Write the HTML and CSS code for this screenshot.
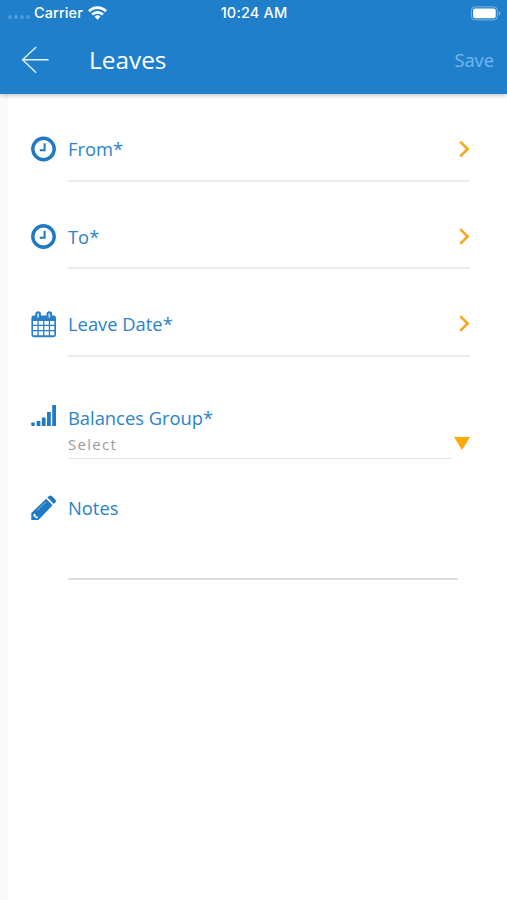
FILE: index.html
```html
<!DOCTYPE html>
<html lang="en">
<head>
<meta charset="utf-8">
<title>Leaves</title>
<link rel="stylesheet" href="styles.css">
</head>
<body>
<header class="header">
  <div class="status">
    <div class="status-left">
      <span class="dots"><i></i><i></i><i></i><i></i></span>
      <span class="carrier">Carrier</span>
      <svg class="wifi" width="19" height="14" viewBox="0 0 19 14" fill="none" stroke="#fff" stroke-width="2.7"><path d="M1 5.2a12 12 0 0 1 17 0M4.1 8.5a7.7 7.7 0 0 1 10.8 0"/><path d="M9.5 13.8 6.6 10.8a4.1 4.1 0 0 1 5.8 0z" fill="#fff" stroke="none"/></svg>
    </div>
    <span class="time">10:24 AM</span>
    <svg class="battery" width="31" height="15" viewBox="0 0 31 15"><rect x="1.4" y=".9" width="26" height="13" rx="3.6" fill="none" stroke="#7fb6e3" stroke-width="1"/><rect x="3.1" y="2.6" width="22.6" height="9.6" rx="2" fill="#fff"/><path d="M28.8 5.4q1.6.6 1.6 2.1t-1.6 2.1z" fill="#7fb6e3"/></svg>
  </div>
  <div class="toolbar">
    <svg class="back" width="28" height="28" viewBox="0 0 28 28" fill="none" stroke="#dff2ff" stroke-width="1.4"><path d="M15.2 1 1.6 13.7l13.6 13M1.6 13.7h26"/></svg>
    <h1 class="title">Leaves</h1>
    <span class="save">Save</span>
  </div>
</header>
<main class="form">
  <div class="row">
    <svg class="icon" width="26" height="26" viewBox="0 0 26 26" fill="none" stroke="#2079c3"><circle cx="12.5" cy="13" r="10.7" stroke-width="3.4"/><path d="M13.6 7.2v7H8.8" stroke-width="2"/></svg>
    <div class="field"><span class="label">From*</span><svg class="chevron" width="12" height="18" viewBox="0 0 12 18"><path d="M2.2 1.6 9.7 9l-7.5 7.4"/></svg></div>
  </div>
  <div class="row">
    <svg class="icon" width="26" height="26" viewBox="0 0 26 26" fill="none" stroke="#2079c3"><circle cx="12.5" cy="12.5" r="10.7" stroke-width="3.4"/><path d="M13.6 6.7v7H8.8" stroke-width="2"/></svg>
    <div class="field"><span class="label">To*</span><svg class="chevron" width="12" height="18" viewBox="0 0 12 18"><path d="M2.2 1.1 9.7 8.5l-7.5 7.4"/></svg></div>
  </div>
  <div class="row">
    <svg class="icon" width="26" height="28" viewBox="0 0 26 28"><rect x=".4" y="4.6" width="24.6" height="21.6" rx="2.4" fill="#2780c9"/><path d="M2 10h4.4v3.8H2zm5.7 0h4.4v3.8H7.7zm5.7 0h4.4v3.8h-4.4zm5.7 0h4.2v3.8h-4.2zM2 15.1h4.4v3.9H2zm5.7 0h4.4v3.9H7.7zm5.7 0h4.4v3.9h-4.4zm5.7 0h4.2v3.9h-4.2zM2 20.3h4.4v4H2zm5.7 0h4.4v4H7.7zm5.7 0h4.4v4h-4.4zm5.7 0h4.2v4h-4.2z" fill="#fff"/><g fill="#b9d9f2" stroke="#2780c9" stroke-width="1.9"><rect x="5.2" y="1.2" width="3.8" height="6.6" rx="1.9"/><rect x="16.4" y="1.2" width="3.8" height="6.6" rx="1.9"/></g></svg>
    <div class="field"><span class="label">Leave Date*</span><svg class="chevron" width="12" height="18" viewBox="0 0 12 18"><path d="M2.2 1.1 9.7 8.5l-7.5 7.4"/></svg></div>
  </div>
  <div class="group">
    <svg class="icon" width="26" height="22" viewBox="0 0 26 22" fill="#2079c3"><rect x=".3" y="17.4" width="3.5" height="3.5" rx=".8"/><rect x="5.6" y="15.9" width="3.8" height="5" rx=".5"/><rect x="10.8" y="12.4" width="3.8" height="8.5" rx=".5"/><rect x="16" y="7" width="3.8" height="13.9" rx=".5"/><rect x="21.2" y="0" width="3.8" height="20.9" rx=".5"/></svg>
    <div class="group-body">
      <span class="label">Balances Group*</span>
      <div class="select"><span class="value">Select</span><svg class="caret" width="16" height="13" viewBox="0 0 16 13"><path d="M0 0h16L8 13z" fill="#ffa800"/></svg></div>
    </div>
  </div>
  <div class="notes">
    <svg class="icon" width="26" height="26" viewBox="0 0 26 26"><path d="M.3 25V18L15.2 3.7l6.4 6.5L7.4 25zM16.4 2.5 18 1q1.6-1.1 3 .2l3.2 3.2q1.4 1.5.2 3.2l-1.6 1.5z" fill="#2079c3"/><path d="m2.9 18.7 1.6.3v2.4h2.3l.2 1.2-1.8 1-2.9-2.9z" fill="#fff"/><path d="m6.2 15.3 8.8-8.4" stroke="#8bbde5" stroke-width=".9"/></svg>
    <div class="notes-body"><span class="label">Notes</span></div>
  </div>
</main>
</body>
</html>
```

FILE: styles.css
```css
* { box-sizing: border-box; }
body {
  margin: 0;
  min-height: 900px;
  display: flex;
  flex-direction: column;
  background: #fafafa;
  font-family: "Open Sans", "Noto Sans", sans-serif;
}
svg { display: block; flex: none; }
.header {
  position: relative;
  height: 94px;
  background: #207fcb;
  color: #fff;
  box-shadow: 0 1px 5px rgba(0, 0, 0, .28);
}
.status {
  display: grid;
  grid-template-columns: 1fr auto 1fr;
  align-items: center;
  height: 26px;
  padding: 0 6px 0 8px;
  font: 500 14.5px/26px Inter, sans-serif;
}
.status-left { display: flex; align-items: center; }
.carrier { letter-spacing: .1px; }
.time { letter-spacing: .15px; margin-right: 1px; }
.dots { display: flex; gap: 2px; width: 26px; padding-top: 8px; }
.dots i { width: 4px; height: 4px; border-radius: 50%; background: #4d9ad8; }
.wifi { margin-left: 5px; }
.battery { justify-self: end; }
.toolbar { display: flex; align-items: center; height: 68px; padding: 0 13px 0 21px; }
.title { margin: 0 0 0 40px; font-size: 24.4px; font-weight: 400; line-height: 34px; }
.save { margin: 0 0 2px auto; font-size: 18.3px; color: #72b9ee; }
.form { flex: 1; margin-left: 8px; padding: 29px 37px 0 23px; background: #fff; }
.row { display: flex; height: 87.5px; }
.icon { margin-right: 11px; }
.row .icon { margin-top: 13px; }
.field {
  flex: 1;
  display: flex;
  align-items: flex-start;
  justify-content: space-between;
  height: 58.5px;
  padding-top: 13px;
  border-bottom: 2px solid #ececec;
}
.label { display: block; font-size: 18.35px; line-height: 26px; color: #2b83c9; }
.chevron { margin-top: 4px; fill: none; stroke: #f5a81c; stroke-width: 2.6; }
.group { display: flex; height: 100px; padding-top: 19px; }
.group .icon { margin-top: 0; }
.group-body { flex: 1; }
.select { display: flex; align-items: flex-start; height: 28px; }
.value {
  flex: 1;
  height: 28px;
  border-bottom: 1px solid #e6e6e6;
  font-size: 15px;
  line-height: 27px;
  letter-spacing: 1.3px;
  color: #9c9c9c;
}
.caret { margin: 6px 0 0 2px; }
.notes { display: flex; padding-top: 9px; }
.notes-body { flex: 1; height: 85px; margin-right: 12px; border-bottom: 2px solid #dedede; }
```
